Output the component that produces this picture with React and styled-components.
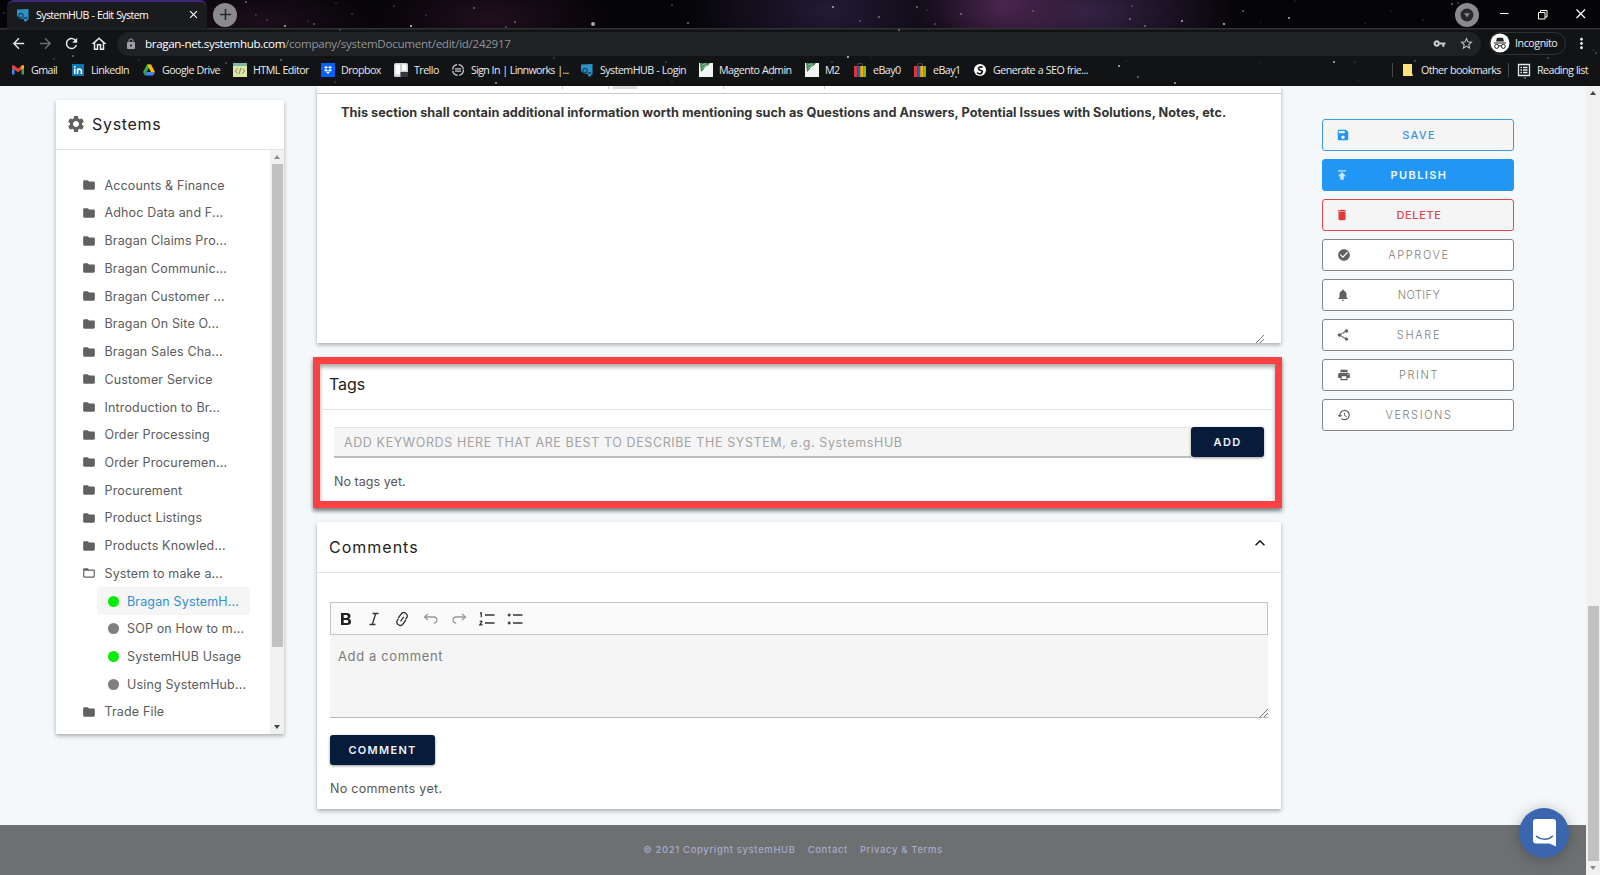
import React from 'react'
import styled, { createGlobalStyle, css } from 'styled-components'
import {
  MdArrowBack, MdArrowForward, MdRefresh, MdOutlineHome, MdLock, MdVpnKey, MdStarBorder, MdMoreVert, MdClose,
  MdSettings, MdFolder, MdFolderOpen, MdSave, MdPublish, MdDelete, MdCheckCircle, MdNotifications, MdShare,
  MdPrint, MdHistory, MdAdd, MdKeyboardArrowUp
} from 'react-icons/md'

const folders = [
  'Accounts & Finance', 'Adhoc Data and F...', 'Bragan Claims Pro...', 'Bragan Communic...', 'Bragan Customer ...',
  'Bragan On Site O...', 'Bragan Sales Cha...', 'Customer Service', 'Introduction to Br...', 'Order Processing',
  'Order Procuremen...', 'Procurement', 'Product Listings', 'Products Knowled...'
]

const systems = [
  { name: 'Bragan SystemH...', live: true, active: true },
  { name: 'SOP on How to m...', live: false },
  { name: 'SystemHUB Usage', live: true },
  { name: 'Using SystemHub...', live: false }
]

const actions = [
  { label: 'SAVE', icon: MdSave, kind: 'save', ls: 1.3, pad: 13 },
  { label: 'PUBLISH', icon: MdPublish, kind: 'publish', ls: 1.4, pad: 12 },
  { label: 'DELETE', icon: MdDelete, kind: 'delete', ls: 0.6, pad: 12 },
  { label: 'APPROVE', icon: MdCheckCircle, ls: 1.6, pad: 14 },
  { label: 'NOTIFY', icon: MdNotifications, ls: 0.4, pad: 13 },
  { label: 'SHARE', icon: MdShare, ls: 1.7, pad: 13 },
  { label: 'PRINT', icon: MdPrint, ls: 1.6, pad: 14 },
  { label: 'VERSIONS', icon: MdHistory, ls: 1.6, pad: 14 }
]

const GmailIcon = () => (
  <svg width="14" height="14" viewBox="0 0 14 14">
    <path d="M1 3v8.5h2.5V6z" fill="#4285f4" />
    <path d="M13 3v8.5h-2.5V6z" fill="#34a853" />
    <path d="M1 2.8 2.6 2 7 5.6 11.4 2l1.6.8V5L7 9.3 1 5z" fill="#ea4335" />
    <path d="M10.5 3 12 2l1 .9V5l-2.5 1.8z" fill="#fbbc04" />
  </svg>
)
const LinkedInIcon = () => (
  <svg width="14" height="14" viewBox="0 0 14 14">
    <rect x="1" y="1" width="12" height="12" fill="#0a78b5" />
    <path d="M3.8 5.6V11M3.8 3v1.4M6.6 11V5.6M6.6 8c0-2.4 3.8-2.6 3.8 0v3" stroke="#fff" strokeWidth="1.6" fill="none" />
  </svg>
)
const DriveIcon = () => (
  <svg width="14" height="14" viewBox="0 0 14 14">
    <path d="M5 1.5h4L4.8 8.7 2.8 12.3 1 9z" fill="#34a853" />
    <path d="M5 1.5h4L13 9H9z" fill="#fbbc04" />
    <path d="M4.8 9H13l-1.9 3.5H2.8z" fill="#4285f4" />
    <path d="M10.9 9H13l-1.7 3.2z" fill="#ea4335" />
  </svg>
)
const HtmlIcon = () => (
  <svg width="14" height="14" viewBox="0 0 14 14">
    <rect width="14" height="14" fill="#dfe6a4" />
    <rect width="14" height="3" fill="#7fb7a3" />
    <path d="M4.5 5.5 2.3 8l2.2 2.5M9.5 5.5 11.7 8l-2.2 2.5M7.8 5l-1.6 6" stroke="#6d8f5d" fill="none" />
  </svg>
)
const DropboxIcon = () => (
  <svg width="14" height="14" viewBox="0 0 14 14">
    <rect width="14" height="14" fill="#0061fe" />
    <path d="m5 3 2 1.4L5 5.8 3 4.4zM9 3l2 1.4-2 1.4-2-1.4zM5 5.9l2 1.4-2 1.4-2-1.4zM9 5.9l2 1.4-2 1.4-2-1.4zM7 8.2l1.8 1.3L7 10.8 5.2 9.5z" fill="#fff" />
  </svg>
)
const TrelloIcon = () => (
  <svg width="14" height="14" viewBox="0 0 14 14">
    <rect width="14" height="14" rx="1.5" fill="#c9ced9" />
    <rect x="1.5" y="1.5" width="4.5" height="10" fill="#fff" />
    <rect x="8" y="1.5" width="4.5" height="6" fill="#fff" />
    <path d="M6.5 9v5H14V9z" fill="#3a3440" />
  </svg>
)
const LinnIcon = () => (
  <svg width="14" height="14" viewBox="0 0 14 14">
    <circle cx="7" cy="7" r="5.4" fill="none" stroke="#c9ccd0" strokeWidth="1.3" strokeDasharray="7 1.5" />
    <path d="M4 5.8h6M4 8.2h6" stroke="#c9ccd0" strokeWidth="1.2" />
  </svg>
)
const HubIcon = () => (
  <svg width="14" height="14" viewBox="0 0 14 14">
    <path d="M1 1.5 12.5 1v10.5L9 13.2 7.5 11 4 10.5 1 8z" fill="#2b93c8" />
    <circle cx="5" cy="7.5" r="2.2" fill="none" stroke="#0d4a6d" strokeWidth="1.2" />
    <path d="M7.5 9.5 11 9l.5 4.5-3 .5z" fill="#15384d" />
    <circle cx="9.5" cy="12" r="1.4" fill="#2b9fd8" />
  </svg>
)
const PageIcon = () => (
  <svg width="14" height="14" viewBox="0 0 14 14">
    <rect width="14" height="14" fill="#f3f5f2" />
    <path d="M1 0h10L9 2.5 6.5 3.5 4 7 2 9z" fill="#3f8350" />
    <path d="M2.5 2.5 7 .5M3 5.5 8 1.5" stroke="#9cc6a3" />
  </svg>
)
const EbayIcon = () => (
  <svg width="14" height="14" viewBox="0 0 14 14">
    <path d="M4.5 3.5v-1a2.5 2.5 0 0 1 5 0v1" stroke="#555" fill="none" />
    <path d="M1 3h3.3v11H1z" fill="#e53238" />
    <path d="M4.3 3h2.9v11H4.3z" fill="#1565d8" />
    <path d="M7.2 3h3v11h-3z" fill="#f5af02" />
    <path d="M10.2 3H13v11h-2.8z" fill="#86b817" />
  </svg>
)
const SeoIcon = () => (
  <svg width="14" height="14" viewBox="0 0 14 14">
    <circle cx="7" cy="7" r="6" fill="#fff" />
    <path d="M9.5 4.5C7 3 4.5 5 6 6.5s4.5.5 3 3-4 1-5 0" stroke="#111" strokeWidth="1.6" fill="none" />
  </svg>
)
const NoteIcon = () => (
  <svg width="14" height="14" viewBox="0 0 14 14">
    <path d="M2 1h9v9l1 3H2z" fill="#fde27a" />
  </svg>
)
const ReadingIcon = () => (
  <svg width="14" height="14" viewBox="0 0 14 14">
    <path d="M1.5 1.5h11v11h-11zM3.5 4.5H5m1 0h4.5M3.5 7H5m1 0h4.5M3.5 9.5H5m1 0h4.5" stroke="#e8eaed" strokeWidth="1.3" fill="none" />
  </svg>
)

const bookmarks = [
  { label: 'Gmail', icon: GmailIcon, width: 60 },
  { label: 'LinkedIn', icon: LinkedInIcon, width: 71 },
  { label: 'Google Drive', icon: DriveIcon, width: 91 },
  { label: 'HTML Editor', icon: HtmlIcon, width: 88 },
  { label: 'Dropbox', icon: DropboxIcon, width: 73 },
  { label: 'Trello', icon: TrelloIcon, width: 57 },
  { label: 'Sign In | Linnworks |...', icon: LinnIcon, width: 129, ls: -0.7 },
  { label: 'SystemHUB - Login', icon: HubIcon, width: 119 },
  { label: 'Magento Admin', icon: PageIcon, width: 106 },
  { label: 'M2', icon: PageIcon, width: 48 },
  { label: 'eBay0', icon: EbayIcon, width: 60 },
  { label: 'eBay1', icon: EbayIcon, width: 60 },
  { label: 'Generate a SEO frie...', icon: SeoIcon, width: 120 }
]

// x, y, radius, opacity
const stars = [
  [593, 24, 2.4, 0.8], [688, 23, 1, 0.9], [672, 5, 0.8, 0.6], [833, 7, 1.2, 0.8], [879, 17, 1, 0.8], [860, 21, 1, 0.6],
  [917, 7, 1, 0.8], [961, 14, 1, 0.8], [935, 24, 1, 0.6], [927, 10, 0.7, 0.5], [1033, 11, 1, 0.5], [899, 30, 1, 0.8],
  [246, 2, 1, 0.8], [256, 15, 0.8, 0.5], [267, 20, 0.8, 0.6], [285, 26, 1.1, 0.9], [314, 24, 1, 0.7], [308, 21, 0.7, 0.5],
  [336, 3, 0.7, 0.5], [352, 14, 0.8, 0.5], [394, 6, 0.8, 0.6], [411, 26, 1.4, 0.9], [426, 15, 0.8, 0.5], [474, 8, 1, 0.8],
  [506, 27, 0.8, 0.7], [515, 22, 1, 0.8], [340, 30, 0.8, 0.6], [1130, 19, 1, 0.8], [1145, 26, 1, 0.8], [1132, 6, 0.8, 0.6],
  [1182, 21, 1.1, 0.9], [1224, 24, 1.2, 1], [1243, 11, 1, 0.8], [1289, 18, 1.1, 0.9], [1295, 1, 0.7, 0.5], [1261, 22, 0.6, 0.5],
  [1423, 20, 0.7, 0.6], [1452, 4, 1, 0.8], [1458, 3, 0.8, 0.7], [1391, 11, 0.7, 0.4], [1365, 23, 0.7, 0.5], [4, 13, 0.8, 0.5],
  [54, 59, 0.8, 0.5], [73, 56, 1, 0.8], [139, 60, 0.7, 0.5], [281, 60, 1, 0.8], [226, 63, 0.8, 0.7], [848, 57, 1.2, 1],
  [871, 58, 0.6, 0.4], [832, 62, 0.8, 0.5], [666, 62, 0.8, 0.6], [554, 58, 0.8, 0.5], [956, 77, 1.1, 0.8], [1119, 66, 1.2, 0.9],
  [1138, 77, 1, 0.8], [1175, 83, 1.2, 0.8], [1334, 62, 1.2, 0.9], [1355, 62, 0.7, 0.5], [1415, 61, 0.9, 0.6], [1548, 58, 0.9, 0.6],
  [1525, 78, 1, 0.8], [1494, 79, 0.7, 0.5], [496, 83, 1.1, 0.8], [335, 82, 0.8, 0.5], [192, 79, 0.7, 0.5], [1596, 53, 0.9, 0.6],
  [1593, 50, 0.7, 0.5], [672, 82, 0.7, 0.5], [772, 79, 0.7, 0.5], [1126, 61, 0.6, 0.5], [1260, 62, 0.6, 0.4], [1358, 80, 0.7, 0.4]
]

const App = () => {
  return (
    <>
      <GlobalStyle />
      <Screen>
        <Browser>
          <Sky viewBox="0 0 1600 86">
            {stars.map(([x, y, r, o]) => <circle key={`${x}-${y}`} cx={x} cy={y} r={r * 0.8} fill="#fff" opacity={o * 0.85} />)}
          </Sky>
          <TabRow>
            <Tab>
              <HubIcon />
              <TabTitle>SystemHUB - Edit System</TabTitle>
              <MdClose size={13} />
            </Tab>
            <RoundBtn><MdAdd size={19} /></RoundBtn>
            <WindowBtns>
              <RoundBtn $dark>
                <svg width="24" height="24" viewBox="0 0 24 24">
                  <circle cx="12" cy="12" r="6.5" fill="#28282b" />
                  <path d="M9 10.2h6l-3 4z" fill="#8b8b8d" />
                </svg>
              </RoundBtn>
              <svg width="113" height="20" viewBox="0 0 113 20" fill="none" stroke="#fff" strokeWidth="1">
                <path d="M0 8.5h8.5" />
                <path d="M38.5 7.5h6.5v6.5h-6.5zM40.5 7.5v-2H47V12h-2" />
                <path d="m76.5 4.5 8.5 8.5m0-8.5L76.5 13" strokeWidth="1.2" />
              </svg>
            </WindowBtns>
          </TabRow>
          <NavRow>
            <NavIcons>
              <MdArrowBack size={17} />
              <Dim><MdArrowForward size={17} /></Dim>
              <MdRefresh size={17} />
              <MdOutlineHome size={18} />
            </NavIcons>
            <UrlBar>
              <Lock><MdLock size={12} /></Lock>
              <Host>bragan-net.systemhub.com</Host>
              <Path>/company/systemDocument/edit/id/242917</Path>
              <UrlIcons>
                <MdVpnKey size={13} />
                <MdStarBorder size={15} />
              </UrlIcons>
            </UrlBar>
            <Incognito>
              <svg width="20" height="20" viewBox="0 0 20 20">
                <circle cx="10" cy="10" r="9.5" fill="#fff" />
                <path d="M4 9.5h12v1H4zM6 8.6 7 4.7h6l1 3.9z" fill="#202124" />
                <path d="M8.7 13.4a2 2 0 1 1-4 0 2 2 0 0 1 4 0zm6.6 0a2 2 0 1 1-4 0 2 2 0 0 1 4 0zM8.6 13q1.4-.8 2.8 0" stroke="#202124" fill="none" />
              </svg>
              Incognito
            </Incognito>
            <MdMoreVert size={17} />
          </NavRow>
          <BookmarkRow>
            {bookmarks.map(b => (
              <Bookmark key={b.label} $width={b.width} $ls={b.ls}><b.icon />{b.label}</Bookmark>
            ))}
            <RightMarks>
              <Rule />
              <Bookmark $width={99}><NoteIcon />Other bookmarks</Bookmark>
              <Rule />
              <Bookmark $width={78}><ReadingIcon />Reading list</Bookmark>
            </RightMarks>
          </BookmarkRow>
        </Browser>

        <Viewport>
          <Page>
            <Content>
              <Sidebar>
                <SideHead><MdSettings size={20} /><span>Systems</span></SideHead>
                <SideBody>
                  <Tree>
                    {folders.map(f => <Folder key={f}><MdFolder size={14} />{f}</Folder>)}
                    <Folder><MdFolderOpen size={14} />System to make a...</Folder>
                    {systems.map(s => (
                      <System key={s.name} $active={s.active}><Dot $live={s.live} />{s.name}</System>
                    ))}
                    <Folder><MdFolder size={14} />Trade File</Folder>
                  </Tree>
                  <Scrollbar>
                    <Arrow $up $faded />
                    <Thumb $top={0} $height={483} />
                    <Spacer />
                    <Arrow />
                  </Scrollbar>
                </SideBody>
              </Sidebar>

              <Main>
                <EditorCard>
                  <EditorBar>
                    <Tick $left={245} />
                    <Tick $left={45} />
                    <PressedBtn />
                    <Tick $left={86} />
                    <Tick $left={100} />
                  </EditorBar>
                  <EditorText>
                    This section shall contain additional information worth mentioning such as Questions and Answers, Potential Issues with Solutions, Notes, etc.
                  </EditorText>
                  <EditorFoot><Grip /></EditorFoot>
                </EditorCard>

                <TagsCard>
                  <TagsHead>Tags</TagsHead>
                  <TagRow>
                    <TagInput>ADD KEYWORDS HERE THAT ARE BEST TO DESCRIBE THE SYSTEM, e.g. SystemsHUB</TagInput>
                    <NavyBtn $width={73}>ADD</NavyBtn>
                  </TagRow>
                  <Note $left={14} $top={15} $ls={0.05}>No tags yet.</Note>
                </TagsCard>

                <CommentsCard>
                  <CommentsHead>
                    Comments
                    <MdKeyboardArrowUp size={20} />
                  </CommentsHead>
                  <CommentBox>
                    <Toolbar>
                      <ToolIcon d="M5 4h5.8c2.3 0 3.7 1.2 3.7 3 0 1.4-.8 2.3-1.9 2.7 1.5.3 2.5 1.4 2.5 3 0 2.1-1.6 3.3-4 3.3H5zm2.7 2v3h2.5c1 0 1.6-.6 1.6-1.5S11.2 6 10.2 6zm0 4.9V14h2.8c1.1 0 1.8-.6 1.8-1.6s-.7-1.5-1.8-1.5z" filled />
                      <ToolIcon d="M8.5 4.5h6M5.5 15.5h6M11.7 4.5 8.3 15.5" />
                      <ToolIcon d="m8.5 12.3 3.2-4.5M6.3 9l2.7-3.8a3.3 3.3 0 0 1 5.6 3.6l-1 1.5M13.8 11l-2.7 3.8a3.3 3.3 0 0 1-5.6-3.7l.9-1.3" />
                      <ToolIcon muted d="M7 5 3.5 8 7 11M3.8 8h9a3.1 3.1 0 0 1 0 6.2" />
                      <ToolIcon muted d="M13 5 16.5 8 13 11M16.2 8h-9a3.1 3.1 0 0 0 0 6.2" />
                      <ToolIcon d="M8 6h9.5M8 14H17.5M3 4h1.3V8.3M2.7 12.7c1-1.2 2.6-.4 1.8.8L2.8 15.9h2.8" />
                      <ToolIcon d="M8 6h9.5M8 14H17.5M2.8 6h2.8M2.8 14h2.8M4.2 4.6v2.8M4.2 12.6v2.8" />
                    </Toolbar>
                    <CommentArea>Add a comment<Grip $end /></CommentArea>
                  </CommentBox>
                  <NavyBtn $width={105} $raised>COMMENT</NavyBtn>
                  <Note $left={13} $top={15} $ls={0.3}>No comments yet.</Note>
                </CommentsCard>
              </Main>

              <Actions>
                {actions.map(a => (
                  <ActionBtn key={a.label} $kind={a.kind} $ls={a.ls} $pad={a.pad}>
                    <a.icon size={14} />
                    <span>{a.label}</span>
                  </ActionBtn>
                ))}
              </Actions>
            </Content>
            <Footer>
              <span>© 2021 Copyright systemHUB</span>
              <span>Contact</span>
              <span>Privacy &amp; Terms</span>
            </Footer>
            <Chat>
              <svg width="26" height="30" viewBox="0 0 26 30">
                <path d="M4 1h17a3 3 0 0 1 3 3v24.5L17.5 25.5H4a3 3 0 0 1-3-3V4a3 3 0 0 1 3-3z" fill="#fff" />
                <path d="M4.5 18.3c5 4 11.5 4 16 0" stroke="#3b66ae" strokeWidth="1.5" strokeLinecap="round" fill="none" />
              </svg>
            </Chat>
          </Page>
          <Scrollbar>
            <Arrow $up />
            <Thumb $top={506} $height={255} />
            <Spacer />
            <Arrow $faded />
          </Scrollbar>
        </Viewport>
      </Screen>
    </>
  )
}

export default App

const ToolIcon = ({ d, filled, muted }) => (
  <svg width="20" height="20" viewBox="0 0 20 20" fill={filled ? '#222' : 'none'} stroke={filled ? 'none' : muted ? '#999' : '#333'} strokeWidth="1.3">
    <path d={d} fillRule="evenodd" />
  </svg>
)

const GlobalStyle = createGlobalStyle`
  * { box-sizing: border-box; }
  body {
    margin: 0;
    overflow: hidden;
    font-family: Inter, "Liberation Sans", sans-serif;
  }
  svg { flex-shrink: 0; }
`

const Screen = styled.div`
  display: flex;
  flex-direction: column;
  width: 1600px;
  height: 875px;
`

const Browser = styled.header`
  position: relative;
  height: 86px;
  flex-shrink: 0;
  color: #e8eaed;
  font-family: "Open Sans", "Noto Sans", sans-serif;
  background:
    linear-gradient(#0000 28px, #303135 28px, #303135 29px, #111314 30px),
    radial-gradient(ellipse 90px 60px at 1005px 5px, #4b2550, #4b255000),
    radial-gradient(ellipse 150px 70px at 1090px 12px, #352245, #35224500),
    radial-gradient(ellipse 150px 80px at 830px 10px, #231a35, #231a3500),
    radial-gradient(ellipse 120px 50px at 490px 18px, #210f1e, #210f1e00),
    radial-gradient(ellipse 130px 40px at 260px 22px, #1c0e1b, #1c0e1b00),
    #050407;
`

const Sky = styled.svg`
  position: absolute;
  inset: 0;
  width: 1600px;
  height: 86px;
`

const TabRow = styled.div`
  position: relative;
  display: flex;
  align-items: center;
  height: 29px;
  padding-left: 7px;
`

const Tab = styled.div`
  display: flex;
  align-items: center;
  width: 200px;
  height: 29px;
  padding: 0 7px 2px 9px;
  border-top: 2px solid #41277a;
  border-radius: 7px 7px 0 0;
  background: #191b1d;
  color: #fff;
`

const TabTitle = styled.span`
  flex: 1;
  margin-left: 6px;
  font-size: 10.6px;
  letter-spacing: -0.6px;
  word-spacing: 0.6px;
`

const RoundBtn = styled.div`
  display: flex;
  align-items: center;
  justify-content: center;
  width: 24px;
  height: 24px;
  margin-left: ${p => (p.$dark ? 0 : '6px')};
  border-radius: 50%;
  background: #8b898c;
  color: #2a2a2c;
`

const WindowBtns = styled.div`
  display: flex;
  align-items: center;
  gap: 21px;
  margin-left: auto;
  margin-right: -13px;
`

const NavRow = styled.div`
  position: relative;
  display: flex;
  align-items: center;
  height: 29px;
  padding: 0 9px 0 10px;
`

const NavIcons = styled.div`
  display: flex;
  gap: 9.5px;
  width: 107px;
`

const Dim = styled.span`
  display: flex;
  color: #6c6e71;
`

const UrlBar = styled.div`
  display: flex;
  align-items: center;
  width: 1364px;
  height: 24px;
  padding: 0 7px 0 8px;
  border-radius: 12px;
  background: #1f2124;
  font-size: 11.6px;
`

const Lock = styled.span`
  display: flex;
  width: 20px;
  color: #9aa0a6;
`

const Host = styled.span`
  color: #fff;
  letter-spacing: -0.35px;
`

const Path = styled.span`
  color: #8f9499;
  letter-spacing: -0.28px;
`

const UrlIcons = styled.div`
  display: flex;
  align-items: center;
  gap: 13px;
  margin-left: auto;
  color: #c8cacd;
`

const Incognito = styled.div`
  display: flex;
  align-items: center;
  gap: 5px;
  width: 77px;
  height: 23px;
  margin: 0 7px 0 8px;
  padding: 0 0 1px 0;
  border: 1px solid #303236;
  border-radius: 12px;
  font-size: 10.7px;
  letter-spacing: -0.45px;
`

const BookmarkRow = styled.div`
  position: relative;
  display: flex;
  align-items: center;
  height: 23px;
  padding: 0 5px 0 11px;
`

const Bookmark = styled.div`
  display: flex;
  align-items: center;
  gap: 6px;
  width: ${p => p.$width}px;
  flex-shrink: 0;
  font-size: 10.7px;
  letter-spacing: ${p => p.$ls || -0.55}px;
  word-spacing: 0.4px;
  white-space: nowrap;
`

const RightMarks = styled.div`
  display: flex;
  align-items: center;
  gap: 8px;
  margin-left: auto;
`

const Rule = styled.i`
  width: 1px;
  height: 14px;
  background: #45474b;
`

const Viewport = styled.div`
  display: flex;
  flex: 1;
`

const Page = styled.div`
  position: relative;
  display: flex;
  flex-direction: column;
  width: 1586px;
  background: #f4f8fa;
`

const Content = styled.div`
  display: flex;
  height: 739px;
  padding-left: 56px;
`

const shadow = css`
  background: #fff;
  box-shadow: 0 2px 4px rgba(0, 0, 0, 0.3);
`

const Sidebar = styled.aside`
  width: 228px;
  height: 634px;
  margin-top: 14px;
  ${shadow}
`

const SideHead = styled.div`
  display: flex;
  align-items: center;
  gap: 6px;
  height: 50px;
  padding-left: 10px;
  border-bottom: 1px solid #e2e4e5;
  color: #222;
  font-size: 16px;
  letter-spacing: 0.7px;

  svg { margin-bottom: 2px; color: #616161; }
  span { padding-bottom: 2px; }
`

const SideBody = styled.div`
  display: flex;
  height: 584px;
`

const Tree = styled.div`
  flex: 1;
  padding-top: 21.4px;
`

const row = css`
  display: flex;
  align-items: center;
  height: 27.72px;
  color: #5b5b5b;
  font-size: 12.5px;
  letter-spacing: 0.15px;
  white-space: pre;
`

const Folder = styled.div`
  ${row}
  gap: 8.5px;
  padding-left: 26px;

  svg { color: #616161; }
`

const System = styled.div`
  ${row}
  gap: 8px;
  width: 153px;
  margin-left: 41px;
  padding-left: 11px;
  border-radius: 4px;
  background: ${p => (p.$active ? '#f5f5f5' : 'transparent')};
  color: ${p => (p.$active ? '#3290d0' : '#5b5b5b')};
`

const Dot = styled.i`
  width: 11px;
  height: 11px;
  flex-shrink: 0;
  border-radius: 50%;
  background: ${p => (p.$live ? '#06ee06' : '#7f7f83')};
`

const Scrollbar = styled.div`
  display: flex;
  flex-direction: column;
  align-items: center;
  width: 14px;
  background: #f1f1f1;
`

const Arrow = styled.i`
  height: 14px;
  display: flex;
  align-items: center;

  &::after {
    content: '';
    border: 3.5px solid transparent;
    border-top-width: 0;
    border-bottom: 4px solid ${p => (p.$faded ? '#8c8c8c' : '#444')};
    transform: ${p => (p.$up ? 'none' : 'rotate(180deg)')};
  }
`

const Thumb = styled.div`
  width: 11px;
  height: ${p => p.$height}px;
  margin-top: ${p => p.$top}px;
  background: #c1c1c1;
`

const Spacer = styled.div`
  flex: 1;
`

const Main = styled.main`
  width: 969px;
  margin-left: 29px;
`

const EditorCard = styled.section`
  display: flex;
  flex-direction: column;
  height: 257px;
  margin: 0 1px 0 4px;
  ${shadow}
`

const EditorBar = styled.div`
  display: flex;
  height: 8px;
  border-bottom: 1px solid #c8c8c8;
`

const Tick = styled.i`
  width: 1px;
  height: 3px;
  margin-left: ${p => p.$left}px;
  background: #ccc;
`

const PressedBtn = styled.i`
  width: 24px;
  height: 3px;
  margin-left: 4px;
  background: #dedede;
`

const EditorText = styled.p`
  flex: 1;
  margin: 0;
  padding: 10px 0 0 24px;
  color: #333;
  font-size: 12.7px;
  font-weight: 700;
  line-height: 17px;
  letter-spacing: 0.03px;
  white-space: nowrap;
`

const EditorFoot = styled.div`
  display: flex;
  justify-content: flex-end;
  padding-right: 17px;
`

const Grip = styled.i`
  width: 8px;
  height: 8px;
  background: linear-gradient(135deg, #0000 46%, #777 46%, #777 54%, #0000 54%, #0000 71%, #777 71%, #777 80%, #0000 80%);
  ${p => p.$end && 'align-self: flex-end;'}
`

const TagsCard = styled.section`
  height: 151px;
  margin-top: 14px;
  border: 7px solid #fb4144;
  background: #fff;
  box-shadow: 0 3px 4px rgba(0, 0, 0, 0.5), inset 0 3px 4px rgba(0, 0, 0, 0.35);
`

const head = css`
  display: flex;
  align-items: center;
  justify-content: space-between;
  border-bottom: 1px solid #e0e2e3;
  color: #222;
  font-size: 16px;
`

const TagsHead = styled.div`
  ${head}
  height: 46px;
  padding: 0 0 5px 9px;
  letter-spacing: -0.1px;
`

const CommentsHead = styled.div`
  ${head}
  height: 51px;
  padding: 0 11px 1px 12px;
  letter-spacing: 1px;

  svg { margin-bottom: 7px; }
`

const TagRow = styled.div`
  display: flex;
  padding: 17px 11px 0 14px;
`

const TagInput = styled.div`
  flex: 1;
  height: 31px;
  padding-left: 10px;
  border-top: 1px solid #e3e3e3;
  border-bottom: 2px solid #bdbdbd;
  background: #f5f5f5;
  color: #a3a3a3;
  font-size: 12.5px;
  line-height: 29px;
  letter-spacing: 0.61px;
`

const NavyBtn = styled.button`
  width: ${p => p.$width}px;
  height: 30px;
  margin: ${p => (p.$raised ? '17px 0 0 13px' : 0)};
  padding: 0;
  border: 0;
  border-radius: 3px;
  background: #071b3b;
  box-shadow: 0 1px 3px rgba(0, 0, 0, 0.4);
  color: #eef2f8;
  font: 600 11px Inter, sans-serif;
  letter-spacing: 1.3px;
`

const Note = styled.p`
  margin: ${p => p.$top}px 0 0 ${p => p.$left}px;
  color: #555;
  font-size: 12.5px;
  line-height: 18px;
  letter-spacing: ${p => p.$ls}px;
`

const CommentsCard = styled.section`
  height: 287px;
  margin: 14px 1px 0 4px;
  ${shadow}
`

const CommentBox = styled.div`
  margin: 29px 13px 0;
`

const Toolbar = styled.div`
  display: flex;
  align-items: center;
  gap: 8.2px;
  height: 33px;
  padding-left: 5px;
  border: 1px solid #c4c4c4;
  background: #fafafa;
`

const CommentArea = styled.div`
  display: flex;
  justify-content: space-between;
  height: 83px;
  padding: 12px 0 0 8px;
  border-bottom: 1px solid #b5b5b5;
  background: #f5f5f5;
  color: #7b7b7b;
  font-size: 13px;
  line-height: 19px;
  letter-spacing: 0.62px;
`

const Actions = styled.div`
  display: flex;
  flex-direction: column;
  gap: 8px;
  width: 192px;
  margin: 33px 0 0 40px;
`

const kinds = {
  save: { line: '#3d9be6', text: '#3796e4', icon: '#2196f3', fill: '#f5f5f5', weight: 500 },
  publish: { line: '#2196f3', text: '#f2f9ff', icon: '#cbe6fd', fill: '#2196f3', weight: 600 },
  delete: { line: '#dc4a50', text: '#dc4a50', icon: '#e53935', fill: '#f5f5f5', weight: 500 },
  plain: { line: '#858585', text: '#7d7d7d', icon: '#616161', fill: '#fff', weight: 300 }
}

const ActionBtn = styled.button`
  display: flex;
  align-items: center;
  height: 32px;
  padding: 0 0 0 ${p => p.$pad}px;
  border: 1px solid ${p => kinds[p.$kind || 'plain'].line};
  border-radius: 3px;
  background: ${p => kinds[p.$kind || 'plain'].fill};
  color: ${p => kinds[p.$kind || 'plain'].text};
  font-family: Inter, sans-serif;
  font-size: 11px;
  font-weight: ${p => kinds[p.$kind || 'plain'].weight};
  letter-spacing: ${p => p.$ls}px;

  svg { color: ${p => kinds[p.$kind || 'plain'].icon}; }
  span { flex: 1; padding-right: ${p => p.$pad + 12}px; text-align: center; }
`

const Footer = styled.footer`
  display: flex;
  align-items: center;
  justify-content: center;
  gap: 12px;
  height: 50px;
  padding-bottom: 2px;
  background: #6d6f70;
  color: #a6aacb;
  font-size: 9.5px;
  font-weight: 500;
  letter-spacing: 0.63px;
`

const Chat = styled.div`
  position: absolute;
  right: 17px;
  bottom: 17px;
  display: flex;
  align-items: center;
  justify-content: center;
  width: 50px;
  height: 50px;
  padding-left: 1px;
  border-radius: 50%;
  background: #3b66ae;
  box-shadow: 0 1px 14px rgba(0, 0, 0, 0.25);
`
